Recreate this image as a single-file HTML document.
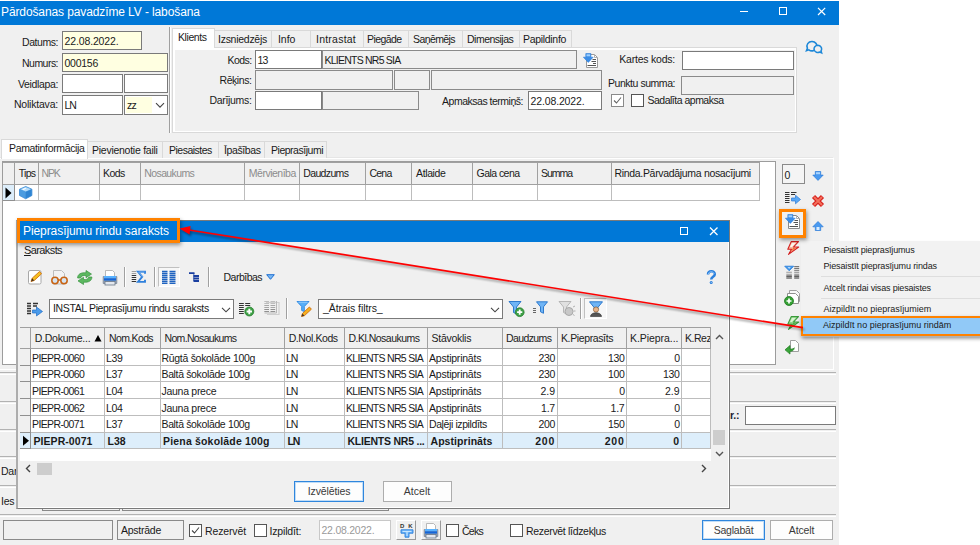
<!DOCTYPE html>
<html lang="lv"><head><meta charset="utf-8"><title>Pārdošanas pavadzīme LV - labošana</title>
<style>
*{box-sizing:border-box;margin:0;padding:0}
html,body{width:980px;height:545px;overflow:hidden;background:#fff}
body{position:relative;font-family:"Liberation Sans",sans-serif;font-size:10.5px;color:#1a1a1a;line-height:13px;letter-spacing:-0.25px}
.a{position:absolute}
span{white-space:nowrap}
.win{left:0;top:0;width:839px;height:545px;background:#f0f0f0;overflow:hidden}
.tb{left:0;top:0;width:839px;height:25px;background:#0078d7;color:#fff;border-top:1px solid #fff}
.tb .t{left:1px;top:3px;font-size:12px;line-height:16px;white-space:nowrap}
.in{position:absolute;background:#fff;border:1px solid #7a7a7a;height:19px;padding:2.5px 0 0 1.5px;white-space:nowrap;overflow:hidden}
.in.y{background:#ffffe1}
.in.d{background:#f0f0f0;border-color:#8a8a8a}
.lb{position:absolute;white-space:nowrap}
.r{text-align:right}
.tab{position:absolute;top:30px;height:17px;border:1px solid #d9d9d9;border-bottom:none;background:#f0f0f0;padding:1.5px 0 0 5px;white-space:nowrap}
.tab.on{top:28px;height:20px;background:#fff;padding-top:2px;z-index:2}
.cb{position:absolute;width:13px;height:13px;border:1px solid #555;background:#fff}
.hl{position:absolute;left:0;width:836px;height:2.5px;border-top:1.5px solid #b2b2b2;border-bottom:1px solid #fff}
.btn{position:absolute;height:21px;border:1px solid #adadad;background:#fdfdfd;text-align:center;padding-top:3px;color:#3a3a3a}
.btn.def{border:1px solid #2f86dd;box-shadow:inset 0 0 0 1px rgba(80,160,235,.35)}
.g{position:absolute;background:#fff}
.gh{position:absolute;top:0;height:22px;background:#f0f0f0;border-right:1px solid #a0a0a0;border-bottom:1px solid #a0a0a0;border-top:1px solid #a0a0a0;padding:4px 0 0 4px;white-space:nowrap;overflow:hidden}
.gc{position:absolute;border-right:1px solid #bdbdbd;border-bottom:1px solid #bdbdbd;white-space:nowrap;overflow:hidden;padding:2px 0 0 2px}
.gc.n{text-align:right;padding:2px 2px 0 0}
.gray{color:#8c8c8c}
.vsep{position:absolute;width:2px;border-left:1px solid #a0a0a0;border-right:1px solid #fff}
</style></head><body>
<div class="a win">
 <!-- title bar -->
 <div class="a tb"><div class="a t"><span style="letter-spacing:-0.11px">Pārdošanas pavadzīme LV - labošana</span></div>
  <svg class="a" style="left:730px;top:0" width="109" height="24" viewBox="0 0 109 24"><path d="M10 10.500h8" stroke="#fff" stroke-width="1" fill="none"/><rect x="49.500" y="6.500" width="7" height="7" stroke="#fff" fill="none"/><path d="M88 6.800l7.200 7.200M95.200 6.800l-7.200 7.200" stroke="#fff" stroke-width="1.200" fill="none"/></svg>
 </div>

 <!-- left header panel -->
 <div class="vsep" style="left:169px;top:27px;height:106px"></div>
 <div class="lb r" style="left:0;width:58px;top:35.5px"><span style="letter-spacing:-0.44px">Datums:</span></div>
 <div class="in y" style="left:62px;top:31px;width:80px"><span style="letter-spacing:-0.13px">22.08.2022.</span></div>
 <div class="lb r" style="left:0;width:58px;top:57px"><span style="letter-spacing:-0.53px">Numurs:</span></div>
 <div class="in y" style="left:62px;top:53px;width:106px"><span style="letter-spacing:-0.26px">000156</span></div>
 <div class="lb r" style="left:0;width:58px;top:77.5px"><span style="letter-spacing:-0.36px">Veidlapa:</span></div>
 <div class="in" style="left:62px;top:74px;width:61px"></div>
 <div class="in" style="left:124px;top:74px;width:44px"></div>
 <div class="lb r" style="left:0;width:58px;top:98px"><span style="letter-spacing:-0.21px">Noliktava:</span></div>
 <div class="in" style="left:62px;top:95px;width:61px;height:20px;padding-top:3px"><span style="letter-spacing:-1.20px">LN</span></div>
 <div class="in" style="left:124px;top:95px;width:44px;height:20px;padding:0"><div class="a" style="left:1px;top:1px;width:26px;height:16px;background:#ffffe1;padding:2px 0 0 1px"><span style="letter-spacing:-0.75px">zz</span></div>
  <svg class="a" style="left:30px;top:6px" width="10" height="7" viewBox="0 0 10 7"><path d="M1 1.200l4 4l4-4" stroke="#444" fill="none" stroke-width="1.100"/></svg></div>

 <!-- top tab control -->
 <div class="a" style="left:172px;top:47px;width:625px;height:86px;border:1px solid #d9d9d9;background:#f0f0f0"></div>
 <div class="a" style="left:173px;top:48px;width:623px;height:84px;border:1px solid #fff;border-top-width:2.5px;border-left-width:2px"></div>
 <div class="tab on" style="left:172px;width:43px;padding-left:5px"><span style="letter-spacing:-0.42px">Klients</span></div>
 <div class="tab" style="left:214px;width:58px;padding-left:3px"><span style="letter-spacing:-0.27px">Izsniedzējs</span></div>
 <div class="tab" style="left:271px;width:40px;padding-left:6px"><span style="letter-spacing:-0.05px">Info</span></div>
 <div class="tab" style="left:310px;width:54px;padding-left:5px"><span style="letter-spacing:0.23px">Intrastat</span></div>
 <div class="tab" style="left:363px;width:46px;padding-left:3px"><span style="letter-spacing:-0.56px">Piegāde</span></div>
 <div class="tab" style="left:408px;width:55px;padding-left:4px"><span style="letter-spacing:-0.59px">Saņēmējs</span></div>
 <div class="tab" style="left:462px;width:58px;padding-left:4px"><span style="letter-spacing:-0.51px">Dimensijas</span></div>
 <div class="tab" style="left:519px;width:53px;padding-left:3px"><span style="letter-spacing:-0.31px">Papildinfo</span></div>

 <div class="lb r" style="left:180px;width:71.500px;top:54px"><span style="letter-spacing:-0.57px">Kods:</span></div>
 <div class="in" style="left:255px;top:50px;width:67px"><span style="letter-spacing:-0.84px">13</span></div>
 <div class="in d" style="left:322px;top:50px;width:255px"><span style="letter-spacing:-0.77px">KLIENTS NR5 SIA</span></div>
 <div class="lb r" style="left:180px;width:71.500px;top:74px"><span style="letter-spacing:-0.43px">Rēķins:</span></div>
 <div class="in d" style="left:255px;top:70px;width:138px;height:20px"></div>
 <div class="in d" style="left:394px;top:70px;width:36px;height:20px"></div>
 <div class="in d" style="left:431px;top:70px;width:171px;height:20px"></div>
 <div class="lb r" style="left:180px;width:71.500px;top:94px"><span style="letter-spacing:-0.33px">Darījums:</span></div>
 <div class="in" style="left:255px;top:91px;width:67px"></div>
 <div class="in d" style="left:322px;top:91px;width:97px"></div>
 <div class="lb r" style="left:420px;width:103px;top:95px"><span style="letter-spacing:-0.49px">Apmaksas termiņš:</span></div>
 <div class="in" style="left:528px;top:91px;width:74px"><span style="letter-spacing:-0.13px">22.08.2022.</span></div>
 <div class="lb r" style="left:600px;width:75px;top:53px"><span style="letter-spacing:-0.22px">Kartes kods:</span></div>
 <div class="in" style="left:682px;top:51px;width:112px"></div>
 <div class="lb r" style="left:600px;width:75px;top:77px"><span style="letter-spacing:-0.46px">Punktu summa:</span></div>
 <div class="in d" style="left:681px;top:76px;width:113px"></div>
 <div class="cb" style="left:611px;top:94px;border-color:#8a8a8a"><svg width="11" height="11" viewBox="0 0 11 11" style="display:block"><path d="M2 5.500l2.500 2.500l4.500-5.500" stroke="#666" fill="none" stroke-width="1.100"/></svg></div>
 <div class="cb" style="left:631px;top:94px"></div>
 <div class="lb" style="left:647.500px;top:94px"><span style="letter-spacing:-0.50px">Sadalīta apmaksa</span></div>
 <!-- icons in header -->
 <svg class="a" style="left:582px;top:53px" width="17" height="16" viewBox="0 0 17 16"><path d="M4.500 1.500h8l3 3v10h-11z" fill="#fff" stroke="#9a9a9a"/><path d="M12.500 1.500v3h3" fill="none" stroke="#b0b0b0"/><path d="M10.500 6.500h3.500M9.500 8.500h4.500M11 10.500h3M5.500 12.500h8.500" stroke="#555"/><path d="M3.800 .6h5.100v3.600h2.300l-4.900 5.200l-4.900-5.200h2.400z" fill="#3b8de6" stroke="#2a7ad8" stroke-width=".6"/><path d="M4.500 1.300h3.700v2h-3.700z" fill="#9fd0ff"/></svg>
 <svg class="a" style="left:805px;top:40px" width="18" height="15" viewBox="0 0 18 15"><path d="M7 1.500a5 4.700 0 1 1 -3.200 8.300l-2.300 .9l.9-2.500a5 4.700 0 0 1 4.600-6.700z" fill="none" stroke="#1e88d8" stroke-width="1.600"/><path d="M12.800 5.300a3.800 3.600 0 1 0 2 6.700l1.800 .9l-.6-2.100a3.800 3.600 0 0 0 -3.200-5.500z" fill="#f0f0f0" stroke="#1e88d8" stroke-width="1.500"/></svg>
 <!-- lower tab control -->
 <div class="a" style="left:0;top:157px;width:834px;height:213px;border:1px solid #fff;border-left:none;border-top-color:#e6e6e6;background:#f0f0f0"></div>
 <div class="a" style="left:0;top:158px;width:833px;height:211px;border-top:1px solid #fff"></div>
 <div class="tab on" style="left:1px;top:139px;width:87px;height:20px;padding-left:7px"><span style="letter-spacing:-0.35px">Pamatinformācija</span></div>
 <div class="tab" style="left:87px;top:141px;height:17px;width:76px;padding-left:4px"><span style="letter-spacing:-0.26px">Pievienotie faili</span></div>
 <div class="tab" style="left:162px;top:141px;height:17px;width:57px;padding-left:6px"><span style="letter-spacing:-0.51px">Piesaistes</span></div>
 <div class="tab" style="left:218px;top:141px;height:17px;width:47px;padding-left:5px"><span style="letter-spacing:-0.40px">Īpašības</span></div>
 <div class="tab" style="left:264px;top:141px;height:17px;width:63px;padding-left:6px"><span style="letter-spacing:-0.48px">Pieprasījumi</span></div>

 <!-- main grid -->
 <div class="g" style="left:2px;top:161px;width:774px;height:204px;border:1px solid #9c9c9c">
  <div class="gh" style="height:22.5px;left:0px;width:12px;top:0;padding:0"></div>
  <div class="gh" style="height:22.5px;left:12px;width:24px;padding-left:3.8px"><span style="letter-spacing:-0.71px">Tips</span></div>
  <div class="gh gray" style="height:22.5px;left:36px;width:61px;padding-left:2.6px"><span style="letter-spacing:-1.20px">NPK</span></div>
  <div class="gh" style="height:22.5px;left:97px;width:41px;padding-left:3.1px"><span style="letter-spacing:-0.63px">Kods</span></div>
  <div class="gh gray" style="height:22.5px;left:138px;width:104px;padding-left:3.3px"><span style="letter-spacing:-0.61px">Nosaukums</span></div>
  <div class="gh gray" style="height:22.5px;left:242px;width:55px;padding-left:3.8px"><span style="letter-spacing:-0.50px">Mērvienība</span></div>
  <div class="gh" style="height:22.5px;left:297px;width:66px;padding-left:3.3px"><span style="letter-spacing:-0.65px">Daudzums</span></div>
  <div class="gh" style="height:22.5px;left:363px;width:46px;padding-left:3.5px"><span style="letter-spacing:-0.78px">Cena</span></div>
  <div class="gh" style="height:22.5px;left:409px;width:61px;padding-left:4px"><span style="letter-spacing:-0.37px">Atlaide</span></div>
  <div class="gh" style="height:22.5px;left:470px;width:65px;padding-left:3.5px"><span style="letter-spacing:-0.54px">Gala cena</span></div>
  <div class="gh" style="height:22.5px;left:535px;width:74px;padding-left:3px"><span style="letter-spacing:-1.04px">Summa</span></div>
  <div class="gh" style="height:22.5px;left:609px;width:148px;padding-left:2.5px"><span style="letter-spacing:-0.32px">Rinda.Pārvadājuma nosacījumi</span></div>
  <div class="gc" style="left:0px;top:22.5px;width:12px;height:16px;background:#ddeefb;border-color:#909090;padding:0"><svg width="10" height="15" viewBox="0 0 10 15" style="display:block"><path d="M2.500 2.500l6 5.500l-6 5.500z" fill="#000"/></svg></div>
  <div class="gc" style="left:12px;top:22.5px;width:24px;height:16px;padding:0"><svg width="23" height="15" viewBox="1 0 23 15" style="display:block"><path d="M5.500 4.200l6.200-2.700l6.200 2.700v6.300l-6.200 3.300l-6.200-3.300z" fill="#4a9be0" stroke="#3a8ad6" stroke-width=".8" stroke-linejoin="round"/><path d="M6.500 4.300l5.200-2.200l5.200 2.200l-5.200 2.300z" fill="#b4dcfa"/><path d="M8 4.200l3-1.300l1.500 .7l-3 1.500z" fill="#fff"/><path d="M11.700 7v6.500l5.800-3.100v-5.800z" fill="#2f84d2"/></svg></div>
  <div class="gc" style="left:36px;top:22.5px;width:61px;height:16px"></div>
  <div class="gc" style="left:97px;top:22.5px;width:41px;height:16px"></div>
  <div class="gc" style="left:138px;top:22.5px;width:104px;height:16px"></div>
  <div class="gc" style="left:242px;top:22.5px;width:55px;height:16px"></div>
  <div class="gc" style="left:297px;top:22.5px;width:66px;height:16px"></div>
  <div class="gc" style="left:363px;top:22.5px;width:46px;height:16px"></div>
  <div class="gc" style="left:409px;top:22.5px;width:61px;height:16px"></div>
  <div class="gc" style="left:470px;top:22.5px;width:65px;height:16px"></div>
  <div class="gc" style="left:535px;top:22.5px;width:74px;height:16px"></div>
  <div class="gc" style="left:609px;top:22.5px;width:148px;height:16px"></div>
 </div>

 <!-- right icon strip -->
 <div class="in" style="left:782px;top:164px;width:23px;height:20px;padding-top:3.5px;border-color:#8a8a8a;background:#f4f4f4"><span style="letter-spacing:-0.84px">0</span></div>
 <svg class="a" style="left:812px;top:171px" width="12" height="10" viewBox="0 0 12 10"><path d="M3.300 .5h5.400v3.600h2.500l-5.200 5.300l-5.200-5.300h2.500z" fill="#4a9af0" stroke="#2a7ad8" stroke-width=".7"/><path d="M4 1.200h4v2h-4z" fill="#a8d4ff"/></svg>
 <svg class="a" style="left:784px;top:191px" width="17" height="14" viewBox="0 0 17 14"><path d="M1 1.500h4.500M1 3.500h4.500M1 5.500h4.500M1 7.500h4.500M1 9.500h4.500M1 11.500h4.500M7 1.500h5.500M7 3.500h4" stroke="#333" stroke-width="1.100"/><path d="M7.500 7h4v-2.800l5 4.300l-5 4.300v-2.800h-4z" fill="#5aa8f5" stroke="#2a7ad8" stroke-width=".7"/></svg>
 <svg class="a" style="left:811px;top:194px" width="14" height="14" viewBox="0 0 14 14"><path d="M2.500 2.500l9 9M11.500 2.500l-9 9" stroke="#d8201c" stroke-width="4.400"/><path d="M3 3l8 8M11 3l-8 8" stroke="#f2705c" stroke-width="2"/></svg>
 <svg class="a" style="left:784px;top:214px" width="17" height="16" viewBox="0 0 17 16"><path d="M4.500 1.500h8l3 3v10h-11z" fill="#fff" stroke="#8a8a8a"/><path d="M12.500 1.500v3h3" fill="none" stroke="#b0b0b0"/><path d="M10.500 6.500h3.500M9.500 8.500h4.500M11 10.500h3M5.500 12.500h8.500" stroke="#555"/><path d="M3.800 .6h5.100v3.600h2.300l-4.900 5.200l-4.900-5.200h2.400z" fill="#3b8de6" stroke="#2a7ad8" stroke-width=".6"/><path d="M4.500 1.300h3.700v2h-3.700z" fill="#9fd0ff"/></svg>
 <svg class="a" style="left:812px;top:221px" width="12" height="10" viewBox="0 0 12 10"><path d="M6 .5l5.200 5.300h-2.500v3.700h-5.400v-3.700h-2.500z" fill="#4a9af0" stroke="#2a7ad8" stroke-width=".7"/><path d="M4.500 6h3v3h-3z" fill="#d8ecff"/></svg>
 <svg class="a" style="left:787px;top:241px" width="13" height="14" viewBox="0 0 13 14"><path d="M4.200 .6h7.300l-5 5.400h5.200l-10.200 7.400l3-5.200h-3.700z" fill="#f6b8a0" stroke="#d42020" stroke-width="1.100" stroke-linejoin="round"/><path d="M5 1.700h4l-4 4.300h-2z" fill="#fff4ec"/><path d="M6 7l3-.3l-5 3.800z" fill="#f07030"/></svg>
 <svg class="a" style="left:784px;top:265px" width="16" height="14" viewBox="0 0 16 14"><path d="M.7 1.200h9l-4.500 4.600z" fill="#3f95e8" stroke="#2a7fdc" stroke-width=".8" stroke-linejoin="round"/><path d="M3.500 2.200h3.400l-1.700 1.600z" fill="#d8ecff"/><path d="M2.300 7.300h5.600M2.300 9.200h5.600" stroke="#9a9a9a" stroke-width="1.100"/><path d="M2.300 11.100h5.600M2.300 13h5.600" stroke="#333" stroke-width="1.100"/><path d="M10.200 1.600h5M10.200 3.500h5" stroke="#777" stroke-width="1.100"/><path d="M10.200 5.400h5M10.200 7.300h5M10.200 9.200h5" stroke="#8a8a8a" stroke-width="1.100"/><path d="M10.200 11.100h5M10.200 13h5" stroke="#333" stroke-width="1.100"/></svg>
 <svg class="a" style="left:783px;top:289px" width="18" height="17" viewBox="0 0 18 17"><path d="M6.500 1.500h7l3 3v8h-10z" fill="#f8f8f8" stroke="#a0a0a0"/><path d="M4.500 4.500h8l3 3v7h-11z" fill="#fff" stroke="#909090"/><circle cx="6" cy="12" r="4.500" fill="#35a035" stroke="#1f7a1f" stroke-width=".8"/><path d="M6 9.500v5M3.500 12h5" stroke="#fff" stroke-width="1.700"/></svg>
 <svg class="a" style="left:787px;top:316px" width="13" height="14" viewBox="0 0 13 14"><path d="M4.200 .6h7.300l-5 5.400h5.200l-10.200 7.400l3-5.200h-3.700z" fill="#8fd48a" stroke="#3a9a3a" stroke-width="1.100" stroke-linejoin="round"/><path d="M5 1.700h4l-4 4.300h-2z" fill="#d8f4d0"/><path d="M6 7l3-.3l-5 3.800z" fill="#4aa844"/></svg>
 <svg class="a" style="left:784px;top:339px" width="16" height="16" viewBox="0 0 16 16"><path d="M6.500 1.500h5l3 3v8h-8z" fill="#fff" stroke="#a0a0a0"/><path d="M6 6.500l-5 4.300l5 4.300v-2.800c2.500 0 3.800-.8 4.300-3.500c-1 1.200-2.300 1.300-4.300 1.300z" fill="#3aa63a" stroke="#1f7a1f" stroke-width=".7"/></svg>

 <!-- lower panels -->
 <div class="hl" style="top:372px"></div>
 <div class="hl" style="top:401px"></div>
 <div class="hl" style="top:429px"></div>
 <div class="hl" style="top:456px"></div>
 <div class="hl" style="top:485px"></div>
 <div class="hl" style="top:514px"></div>
 <div class="lb" style="left:730px;top:409px;font-weight:bold;color:#223">r.:</div>
 <div class="in" style="left:745px;top:406px;width:91px"></div>
 <div class="lb" style="left:1px;top:465px">Dar</div>
 <div class="lb" style="left:1px;top:495px">Ies</div>
 <div class="in d" style="left:42px;top:489px;width:78px;height:22px"></div>
 <div class="in d" style="left:122px;top:489px;width:267px;height:22px"></div>

 <!-- bottom bar -->
 <div class="in d" style="left:3px;top:520px;width:110px;height:20px"></div>
 <div class="in d" style="left:117px;top:520px;width:67px;height:20px;padding-top:3px;padding-left:3px"><span style="letter-spacing:-0.25px">Apstrāde</span></div>
 <div class="cb" style="left:189px;top:524px"><svg width="11" height="11" viewBox="0 0 11 11" style="display:block"><path d="M2 5.500l2.500 2.500l4.500-5.500" stroke="#444" fill="none" stroke-width="1.100"/></svg></div>
 <div class="lb" style="left:205px;top:524.5px"><span style="letter-spacing:-0.13px">Rezervēt</span></div>
 <div class="cb" style="left:254px;top:524px"></div>
 <div class="lb" style="left:269.500px;top:524.5px"><span style="letter-spacing:-0.17px">Izpildīt:</span></div>
 <div class="in" style="left:319px;top:520px;width:72px;height:20px;padding-top:3px;border-color:#c8c8c8;color:#9a9a9a"><span style="letter-spacing:-0.24px">22.08.2022.</span></div>
 <div class="a" style="left:396px;top:520px;width:20px;height:20px;border:1px solid #fff;border-right-color:#9a9a9a;border-bottom-color:#9a9a9a;background:#f0f0f0"><div class="a" style="left:3px;top:2px;font-size:6px;line-height:6px;font-weight:bold;color:#333;letter-spacing:4px">DK</div><svg class="a" style="left:2.500px;top:8px" width="14" height="9" viewBox="0 0 14 9"><path d="M1 .8h12v3.400h-4v4h-4v-4h-4z" fill="#6db4f8" stroke="#2a7fdc" stroke-width=".9"/><path d="M2.500 2.400h9M7 3v4" stroke="#d4ecff" stroke-width="1"/></svg></div>
 <div class="a" style="left:421px;top:520px;width:20px;height:20px;border:1px solid #fff;border-right-color:#9a9a9a;border-bottom-color:#9a9a9a;background:#f0f0f0"><svg class="a" style="left:1px;top:2px" width="16" height="16" viewBox="0 0 16 16"><path d="M1.200 6.500h13.600v7h-13.600z" fill="#9aa6b4" stroke="#7c8898" stroke-width=".8"/><path d="M3.500 .5h7l2 2v4.500h-9z" fill="#fff" stroke="#a8a8a8" stroke-width=".8"/><rect x="2" y="6" width="12" height="2.300" fill="#59b2ff"/><rect x="2" y="8.300" width="12" height="2.300" fill="#1565d8"/><rect x="3" y="11.500" width="10" height="3.500" fill="#e4e8ee" stroke="#6a7888" stroke-width=".8"/></svg></div>
 <div class="cb" style="left:446px;top:524px"></div>
 <div class="lb" style="left:462px;top:524.5px"><span style="letter-spacing:-0.73px">Čeks</span></div>
 <div class="cb" style="left:510px;top:524px"></div>
 <div class="lb" style="left:526px;top:524.5px"><span style="letter-spacing:-0.32px">Rezervēt līdzekļus</span></div>
 <div class="btn def" style="left:702px;top:520px;width:63px;height:20px"><span style="letter-spacing:-0.22px">Saglabāt</span></div>
 <div class="btn" style="left:770px;top:520px;width:63px;height:20px"><span style="letter-spacing:-0.14px">Atcelt</span></div>
</div>
<!-- dialog -->
<div class="a" style="left:16px;top:220px;width:714px;height:289px;background:#f0f0f0;border:1px solid #7a7a7a;border-left:2px solid #adadad;overflow:hidden"><div class="a" style="left:0;top:0;width:711px;height:287px;border-right:1px solid #fff;border-bottom:1px solid #fff"></div><div class="a" style="left:1px;top:-1px;width:709px;height:289px">
 <div class="a" style="left:-1px;top:1px;width:712px;height:21px;background:#0078d7;color:#fff"><div class="a" style="left:5px;top:2px;font-size:12px;line-height:16px"><span style="letter-spacing:-0.08px">Pieprasījumu rindu saraksts</span></div>
  <svg class="a" style="left:655px;top:-1px" width="54" height="23" viewBox="0 0 54 23"><rect x="7.500" y="7.500" width="7" height="7" stroke="#fff" fill="none"/><path d="M37 7.500l7.500 7.500M44.500 7.500l-7.500 7.500" stroke="#fff" stroke-width="1.300" fill="none"/></svg></div>
 <div class="lb" style="left:5px;top:23px;font-size:11px;line-height:14px;letter-spacing:0"><span style="letter-spacing:-0.60px"><u>S</u>araksts</span></div>
 <!-- toolbar 1 -->
 <svg class="a" style="left:9px;top:50px" width="15" height="15" viewBox="0 0 15 15"><rect x=".5" y=".5" width="12.500" height="13.500" rx="1.500" fill="#fff" stroke="#a8a8a8"/><path d="M3 11.500l1.200-3.300l7.300-6.700l2 2.300l-7.300 6.700z" fill="#f5c020" stroke="#d07010" stroke-width=".9"/><path d="M3 11.500l1.200-3.300l2 2.300z" fill="#4a3520"/></svg>
 <svg class="a" style="left:31px;top:50px" width="19" height="15" viewBox="0 0 19 15"><path d="M3.500 .5h8l3 3v10.500h-11z" fill="#f2f2f2" stroke="#bcbcbc"/><circle cx="5" cy="10.500" r="3.200" fill="#d4e4f2" stroke="#c86414" stroke-width="1.500"/><circle cx="14" cy="10.500" r="3.200" fill="#d4e4f2" stroke="#c86414" stroke-width="1.500"/><path d="M8 10h3" stroke="#c86414" stroke-width="1.500"/></svg>
 <svg class="a" style="left:58px;top:50px" width="16" height="15" viewBox="0 0 16 15"><g fill="#5cb860" stroke="#3a9440" stroke-width=".7"><path d="M.6 8c0-4 3.500-5.600 8.400-5.200v-2.300l5.500 3.600l-5.500 3.600v-2.200c-2.800-.4-4.800 .5-5.400 2.500z"/><path d="M.6 8c0-4 3.500-5.600 8.400-5.200v-2.300l5.500 3.600l-5.500 3.600v-2.200c-2.800-.4-4.800 .5-5.400 2.500z" transform="rotate(180 7.750 7.500)"/></g></svg>
 <svg class="a" style="left:83px;top:50px" width="16" height="16" viewBox="0 0 16 16"><path d="M1.200 6.500h13.600v7h-13.600z" fill="#9aa6b4" stroke="#7c8898" stroke-width=".8"/><path d="M3.500 .5h7l2 2v4.500h-9z" fill="#fff" stroke="#a8a8a8" stroke-width=".8"/><rect x="2" y="6" width="12" height="2.300" fill="#59b2ff"/><rect x="2" y="8.300" width="12" height="2.300" fill="#1565d8"/><rect x="3" y="11.500" width="10" height="3.500" fill="#e4e8ee" stroke="#6a7888" stroke-width=".8"/></svg>
 <div class="vsep" style="left:105px;top:47px;height:20px"></div>
 <svg class="a" style="left:112px;top:50px" width="16" height="14" viewBox="0 0 16 14"><path d="M.7 1.500h4.500M.7 3.500h4.500" stroke="#a0a0a0" stroke-width="1.200"/><path d="M.7 5.500h4.500M.7 7.500h4.500M.7 9.500h4.500M.7 11.500h4.500" stroke="#333" stroke-width="1.200"/><path d="M14 3.800v-2.100h-7l4.200 5.100l-4.200 5.100h7v-2.100" fill="none" stroke="#2f80dc" stroke-width="1.900"/><path d="M13.600 2h-6l4 4.800" fill="none" stroke="#a8d0ff" stroke-width=".5"/></svg>
 <div class="vsep" style="left:135px;top:47px;height:20px"></div>
 <div class="a" style="left:139px;top:47px;width:22px;height:20px;background:#f7f7f7;border:1px solid #c0c0c0;border-right-color:#fff;border-bottom-color:#fff"></div>
 <svg class="a" style="left:143px;top:50px" width="14" height="14" viewBox="0 0 14 14"><path d="M0 1.500h5.500M0 3.500h5.500M0 5.500h5.500M0 7.500h5.500M0 9.500h5.500M0 11.500h5.500M0 13.500h5.500M7.500 1.500h6M7.500 3.500h6M7.500 5.500h6M7.500 7.500h6M7.500 9.500h6M7.500 11.500h6M7.500 13.500h6" stroke="#1f63c0" stroke-width="1.300"/></svg>
 <svg class="a" style="left:170px;top:52px" width="11" height="11" viewBox="0 0 11 11"><path d="M0 1.200h5.500M4.500 4h5.500M4.500 6.500h5.500M4.500 9h5.500" stroke="#1a3fa0" stroke-width="1.800" fill="none"/><path d="M4.800 1v8" stroke="#1a3fa0" stroke-width=".8"/></svg>
 <div class="vsep" style="left:189px;top:47px;height:20px"></div>
 <div class="lb" style="left:204.500px;top:51px"><span style="letter-spacing:-0.51px">Darbības</span></div>
 <svg class="a" style="left:247px;top:54px" width="9" height="6" viewBox="0 0 9 6"><path d="M.7 .7h7.600l-3.800 4.600z" fill="#7ab8f5" stroke="#1f6fd0" stroke-width="1"/></svg>
 <svg class="a" style="left:687px;top:50px" width="11" height="15" viewBox="0 0 11 15"><path d="M2 4.500c0-4.200 6.800-4.200 6.800-.3c0 2.700-3.600 2.500-3.600 5.300" fill="none" stroke="#2a7fdc" stroke-width="2.500"/><path d="M2.300 4c.3-3 5.600-3 5.800 0" fill="none" stroke="#9fd0ff" stroke-width=".8"/><circle cx="5.200" cy="12.600" r="1.500" fill="#2a7fdc"/><circle cx="5.200" cy="12.600" r=".5" fill="#cfe8ff"/></svg>

 <!-- toolbar 2 -->
 <svg class="a" style="left:8px;top:82px" width="16" height="15" viewBox="0 0 16 15"><path d="M0 1.500h4M0 4h4M0 6.500h4M0 9h4M0 11.500h4M6 1.500h5M6 4h4" stroke="#333" stroke-width="1.300"/><path d="M5.500 8h4v-3l6 4.500l-6 4.500v-3h-4z" fill="#4b9bea" stroke="#1f6fc8" stroke-width=".7"/></svg>
 <div class="in" style="left:30px;top:79px;width:185px;height:20px;padding:2px 0 0 3px"><span style="letter-spacing:-0.36px">INSTAL Pieprasījumu rindu saraksts</span><svg class="a" style="left:171px;top:7px" width="10" height="6" viewBox="0 0 10 6"><path d="M1 .8l4 4l4-4" stroke="#444" fill="none" stroke-width="1.100"/></svg></div>
 <svg class="a" style="left:220px;top:82px" width="16" height="16" viewBox="0 0 16 16"><path d="M0 1.500h4.800M0 3.500h4.800M0 5.500h4.800M0 7.500h4.800M0 9.500h4.800M0 11.500h4.800M6.200 1.500h5M6.200 3.500h5" stroke="#333" stroke-width="1.100"/><circle cx="10.300" cy="9.500" r="4.500" fill="#3ea046" stroke="#2a8030" stroke-width=".8"/><path d="M10.300 6.800v5.400M7.600 9.500h5.400" stroke="#fff" stroke-width="1.900"/></svg>
 <svg class="a" style="left:245px;top:80px" width="16" height="16" viewBox="0 0 16 16"><path d="M2 2.500h13v12h-12" fill="none" stroke="#cfcfcf" stroke-width="1.200"/><path d="M.3 1.500h4.700M.3 3.500h4.700M6.500 1.500h4.700M6.500 3.500h4.700" stroke="#bdbdbd" stroke-width="1.100"/><path d="M.3 5.500h4.700M.3 7.500h4.700M6.500 5.500h4.700M6.500 7.500h4.700" stroke="#a6a6a6" stroke-width="1.100"/><path d="M.3 9.500h4.700M.3 11.500h4.700M6.500 9.500h4.700M6.500 11.500h4.700" stroke="#909090" stroke-width="1.100"/><path d="M12.500 1v12h-12" fill="none" stroke="#b8b8b8" stroke-width="1"/></svg>
 <div class="vsep" style="left:267px;top:78px;height:21px"></div>
 <svg class="a" style="left:277px;top:80px" width="18" height="18" viewBox="0 0 18 18"><path d="M1 1.500h12l-4.700 5v5l-2.600-1v-4z" fill="#56aef8" stroke="#2a86e0" stroke-width=".9"/><path d="M2.500 2.200h9" stroke="#a8d8ff" stroke-width=".8"/><path d="M5.500 16.500l.9-3l7-6.500l2 2.200l-7 6.500z" fill="#f5b020" stroke="#d07010" stroke-width=".9"/><path d="M5.500 16.500l.9-3l2 2.200z" fill="#4a3520"/></svg>
 <div class="in" style="left:299px;top:79px;width:185px;height:20px;padding:2px 0 0 4px"><span style="letter-spacing:-0.07px">_Ātrais filtrs_</span><svg class="a" style="left:171px;top:7px" width="10" height="6" viewBox="0 0 10 6"><path d="M1 .8l4 4l4-4" stroke="#444" fill="none" stroke-width="1.100"/></svg></div>
 <svg class="a" style="left:489px;top:80px" width="19" height="18" viewBox="0 0 19 18"><path d="M1 1.500h12l-4.500 5.500v7l-3-1.500v-5.500z" fill="#6fb4f5" stroke="#1f6fc8" stroke-width=".9"/><circle cx="11.700" cy="12.200" r="4.400" fill="#3ea046" stroke="#2a8030" stroke-width=".8"/><path d="M11.700 9.600v5.200M9.100 12.200h5.200" stroke="#fff" stroke-width="1.800"/></svg>
 <svg class="a" style="left:514px;top:81px" width="16" height="15" viewBox="0 0 16 15"><path d="M3.500 .8h11l-4 5v6.500l-3-1.500v-5z" fill="#6fb4f5" stroke="#1f6fc8" stroke-width=".9"/><path d="M0 7.500h3M0 9.500h3M0 11.500h3" stroke="#666" stroke-width="1.100"/></svg>
 <svg class="a" style="left:539px;top:80px" width="18" height="17" viewBox="0 0 18 17"><path d="M1 1.500h12l-4.500 5.500v7l-3-1.500v-5.500z" fill="#e0e0e0" stroke="#b0b0b0" stroke-width=".9"/><circle cx="11" cy="11.500" r="4" fill="#c8c8c8" stroke="#a8a8a8"/><path d="M15 7l2-1M15.500 11h2M15 14.500l1.500 1" stroke="#b0b0b0"/></svg>
 <div class="vsep" style="left:561px;top:78px;height:21px"></div>
 <div class="a" style="left:565px;top:78px;width:23px;height:21px;background:#f7f7f7;border:1px solid #c0c0c0;border-right-color:#fff;border-bottom-color:#fff"></div>
 <svg class="a" style="left:570px;top:81px" width="14" height="16" viewBox="0 0 14 16"><path d="M.5 .8h13l-4.500 5.500v2h-4v-2z" fill="#6fb4f5" stroke="#1f6fc8" stroke-width=".9"/><circle cx="7" cy="8.500" r="2.600" fill="#e8b48a" stroke="#8a5a30" stroke-width=".7"/><path d="M1.500 15.500c0-5 11-5 11 0z" fill="#555" stroke="#333" stroke-width=".6"/></svg>
 <!-- dialog grid -->
 <div class="g" style="left:1px;top:107px;width:708px;height:134px;background:#fff;overflow:hidden">
  <div class="gh" style="left:0;width:11px;padding:0"></div>
  <div class="gh" style="left:11px;width:74px;padding-left:3.8px;color:#222"><span style="letter-spacing:-0.26px">D.Dokume...</span><svg class="a" style="left:63px;top:7px" width="8" height="7" viewBox="0 0 8 7"><path d="M4 0l3.500 6.500h-7z" fill="#000"/></svg></div>
  <div class="gh" style="left:85px;width:55.5px;padding-left:4px;color:#222"><span style="letter-spacing:-0.63px">Nom.Kods</span></div>
  <div class="gh" style="left:140.5px;width:124.5px;padding-left:4px;color:#222"><span style="letter-spacing:-0.66px">Nom.Nosaukums</span></div>
  <div class="gh" style="left:265px;width:60px;padding-left:3.7px;color:#222"><span style="letter-spacing:-0.41px">D.Nol.Kods</span></div>
  <div class="gh" style="left:325px;width:83px;padding-left:3.5px;color:#222"><span style="letter-spacing:-0.51px">D.Kl.Nosaukums</span></div>
  <div class="gh" style="left:408px;width:74.5px;padding-left:3.5px;color:#222"><span style="letter-spacing:-0.26px">Stāvoklis</span></div>
  <div class="gh" style="left:482.5px;width:55px;padding-left:3.5px;color:#222"><span style="letter-spacing:-0.61px">Daudzums</span></div>
  <div class="gh" style="left:537.5px;width:69.5px;padding-left:3.5px;color:#222"><span style="letter-spacing:-0.38px">K.Pieprasīts</span></div>
  <div class="gh" style="left:607px;width:55px;padding-left:3px;color:#222"><span style="letter-spacing:-0.06px">K.Piepra...</span></div>
  <div class="gh" style="left:662px;width:29px;padding-left:3px;color:#222"><span style="letter-spacing:-0.47px">K.Rezervēts</span></div>
  <div class="gc" style="left:0;top:22.00px;width:11px;height:16.72px;background:#f0f0f0;border-color:#909090;padding:0"></div>
  <div class="gc" style="left:11px;top:22.00px;width:74px;height:16.72px;padding-left:1px;padding-top:2.6px;"><span style="letter-spacing:-0.61px">PIEPR-0060</span></div>
  <div class="gc" style="left:85px;top:22.00px;width:55.5px;height:16.72px;padding-left:1px;padding-top:2.6px;"><span style="letter-spacing:-0.34px">L39</span></div>
  <div class="gc" style="left:140.5px;top:22.00px;width:124.5px;height:16.72px;padding-left:1px;padding-top:2.6px;"><span style="letter-spacing:-0.30px">Rūgtā šokolāde 100g</span></div>
  <div class="gc" style="left:265px;top:22.00px;width:60px;height:16.72px;padding-left:1px;padding-top:2.6px;"><span style="letter-spacing:-1.20px">LN</span></div>
  <div class="gc" style="left:325px;top:22.00px;width:83px;height:16.72px;padding-left:1px;padding-top:2.6px;"><span style="letter-spacing:-0.70px">KLIENTS NR5 SIA</span></div>
  <div class="gc" style="left:408px;top:22.00px;width:74.5px;height:16.72px;padding-left:1px;padding-top:2.6px;"><span style="letter-spacing:-0.22px">Apstiprināts</span></div>
  <div class="gc n" style="left:482.5px;top:22.00px;width:55px;height:16.72px;padding-right:1.5px;padding-left:1px;padding-top:2.6px;"><span style="letter-spacing:-0.34px">230</span></div>
  <div class="gc n" style="left:537.5px;top:22.00px;width:69.5px;height:16.72px;padding-right:1.5px;padding-left:1px;padding-top:2.6px;"><span style="letter-spacing:-0.34px">130</span></div>
  <div class="gc n" style="left:607px;top:22.00px;width:55px;height:16.72px;padding-right:1.5px;padding-left:1px;padding-top:2.6px;"><span style="letter-spacing:-0.64px">0</span></div>
  <div class="gc" style="left:662px;top:22.00px;width:29px;height:16.72px;padding-left:1px;padding-top:2.6px;"></div>
  <div class="gc" style="left:0;top:38.72px;width:11px;height:16.72px;background:#f0f0f0;border-color:#909090;padding:0"></div>
  <div class="gc" style="left:11px;top:38.72px;width:74px;height:16.72px;padding-left:1px;padding-top:2.6px;"><span style="letter-spacing:-0.61px">PIEPR-0060</span></div>
  <div class="gc" style="left:85px;top:38.72px;width:55.5px;height:16.72px;padding-left:1px;padding-top:2.6px;"><span style="letter-spacing:-0.34px">L37</span></div>
  <div class="gc" style="left:140.5px;top:38.72px;width:124.5px;height:16.72px;padding-left:1px;padding-top:2.6px;"><span style="letter-spacing:-0.36px">Baltā šokolāde 100g</span></div>
  <div class="gc" style="left:265px;top:38.72px;width:60px;height:16.72px;padding-left:1px;padding-top:2.6px;"><span style="letter-spacing:-1.20px">LN</span></div>
  <div class="gc" style="left:325px;top:38.72px;width:83px;height:16.72px;padding-left:1px;padding-top:2.6px;"><span style="letter-spacing:-0.70px">KLIENTS NR5 SIA</span></div>
  <div class="gc" style="left:408px;top:38.72px;width:74.5px;height:16.72px;padding-left:1px;padding-top:2.6px;"><span style="letter-spacing:-0.22px">Apstiprināts</span></div>
  <div class="gc n" style="left:482.5px;top:38.72px;width:55px;height:16.72px;padding-right:1.5px;padding-left:1px;padding-top:2.6px;"><span style="letter-spacing:-0.34px">230</span></div>
  <div class="gc n" style="left:537.5px;top:38.72px;width:69.5px;height:16.72px;padding-right:1.5px;padding-left:1px;padding-top:2.6px;"><span style="letter-spacing:-0.34px">100</span></div>
  <div class="gc n" style="left:607px;top:38.72px;width:55px;height:16.72px;padding-right:1.5px;padding-left:1px;padding-top:2.6px;"><span style="letter-spacing:-0.34px">130</span></div>
  <div class="gc" style="left:662px;top:38.72px;width:29px;height:16.72px;padding-left:1px;padding-top:2.6px;"></div>
  <div class="gc" style="left:0;top:55.44px;width:11px;height:16.72px;background:#f0f0f0;border-color:#909090;padding:0"></div>
  <div class="gc" style="left:11px;top:55.44px;width:74px;height:16.72px;padding-left:1px;padding-top:2.6px;"><span style="letter-spacing:-0.61px">PIEPR-0061</span></div>
  <div class="gc" style="left:85px;top:55.44px;width:55.5px;height:16.72px;padding-left:1px;padding-top:2.6px;"><span style="letter-spacing:-0.34px">L04</span></div>
  <div class="gc" style="left:140.5px;top:55.44px;width:124.5px;height:16.72px;padding-left:1px;padding-top:2.6px;"><span style="letter-spacing:-0.28px">Jauna prece</span></div>
  <div class="gc" style="left:265px;top:55.44px;width:60px;height:16.72px;padding-left:1px;padding-top:2.6px;"><span style="letter-spacing:-1.20px">LN</span></div>
  <div class="gc" style="left:325px;top:55.44px;width:83px;height:16.72px;padding-left:1px;padding-top:2.6px;"><span style="letter-spacing:-0.70px">KLIENTS NR5 SIA</span></div>
  <div class="gc" style="left:408px;top:55.44px;width:74.5px;height:16.72px;padding-left:1px;padding-top:2.6px;"><span style="letter-spacing:-0.22px">Apstiprināts</span></div>
  <div class="gc n" style="left:482.5px;top:55.44px;width:55px;height:16.72px;padding-right:1.5px;padding-left:1px;padding-top:2.6px;"><span style="letter-spacing:-0.04px">2.9</span></div>
  <div class="gc n" style="left:537.5px;top:55.44px;width:69.5px;height:16.72px;padding-right:1.5px;padding-left:1px;padding-top:2.6px;"><span style="letter-spacing:-0.64px">0</span></div>
  <div class="gc n" style="left:607px;top:55.44px;width:55px;height:16.72px;padding-right:1.5px;padding-left:1px;padding-top:2.6px;"><span style="letter-spacing:-0.04px">2.9</span></div>
  <div class="gc" style="left:662px;top:55.44px;width:29px;height:16.72px;padding-left:1px;padding-top:2.6px;"></div>
  <div class="gc" style="left:0;top:72.16px;width:11px;height:16.72px;background:#f0f0f0;border-color:#909090;padding:0"></div>
  <div class="gc" style="left:11px;top:72.16px;width:74px;height:16.72px;padding-left:1px;padding-top:2.6px;"><span style="letter-spacing:-0.61px">PIEPR-0062</span></div>
  <div class="gc" style="left:85px;top:72.16px;width:55.5px;height:16.72px;padding-left:1px;padding-top:2.6px;"><span style="letter-spacing:-0.34px">L04</span></div>
  <div class="gc" style="left:140.5px;top:72.16px;width:124.5px;height:16.72px;padding-left:1px;padding-top:2.6px;"><span style="letter-spacing:-0.28px">Jauna prece</span></div>
  <div class="gc" style="left:265px;top:72.16px;width:60px;height:16.72px;padding-left:1px;padding-top:2.6px;"><span style="letter-spacing:-1.20px">LN</span></div>
  <div class="gc" style="left:325px;top:72.16px;width:83px;height:16.72px;padding-left:1px;padding-top:2.6px;"><span style="letter-spacing:-0.70px">KLIENTS NR5 SIA</span></div>
  <div class="gc" style="left:408px;top:72.16px;width:74.5px;height:16.72px;padding-left:1px;padding-top:2.6px;"><span style="letter-spacing:-0.22px">Apstiprināts</span></div>
  <div class="gc n" style="left:482.5px;top:72.16px;width:55px;height:16.72px;padding-right:1.5px;padding-left:1px;padding-top:2.6px;"><span style="letter-spacing:-0.20px">1.7</span></div>
  <div class="gc n" style="left:537.5px;top:72.16px;width:69.5px;height:16.72px;padding-right:1.5px;padding-left:1px;padding-top:2.6px;"><span style="letter-spacing:-0.20px">1.7</span></div>
  <div class="gc n" style="left:607px;top:72.16px;width:55px;height:16.72px;padding-right:1.5px;padding-left:1px;padding-top:2.6px;"><span style="letter-spacing:-0.64px">0</span></div>
  <div class="gc" style="left:662px;top:72.16px;width:29px;height:16.72px;padding-left:1px;padding-top:2.6px;"></div>
  <div class="gc" style="left:0;top:88.88px;width:11px;height:16.72px;background:#f0f0f0;border-color:#909090;padding:0"></div>
  <div class="gc" style="left:11px;top:88.88px;width:74px;height:16.72px;padding-left:1px;padding-top:2.6px;"><span style="letter-spacing:-0.61px">PIEPR-0071</span></div>
  <div class="gc" style="left:85px;top:88.88px;width:55.5px;height:16.72px;padding-left:1px;padding-top:2.6px;"><span style="letter-spacing:-0.34px">L37</span></div>
  <div class="gc" style="left:140.5px;top:88.88px;width:124.5px;height:16.72px;padding-left:1px;padding-top:2.6px;"><span style="letter-spacing:-0.36px">Baltā šokolāde 100g</span></div>
  <div class="gc" style="left:265px;top:88.88px;width:60px;height:16.72px;padding-left:1px;padding-top:2.6px;"><span style="letter-spacing:-1.20px">LN</span></div>
  <div class="gc" style="left:325px;top:88.88px;width:83px;height:16.72px;padding-left:1px;padding-top:2.6px;"><span style="letter-spacing:-0.70px">KLIENTS NR5 SIA</span></div>
  <div class="gc" style="left:408px;top:88.88px;width:74.5px;height:16.72px;padding-left:1px;padding-top:2.6px;"><span style="letter-spacing:-0.40px">Daļēji izpildīts</span></div>
  <div class="gc n" style="left:482.5px;top:88.88px;width:55px;height:16.72px;padding-right:1.5px;padding-left:1px;padding-top:2.6px;"><span style="letter-spacing:-0.34px">200</span></div>
  <div class="gc n" style="left:537.5px;top:88.88px;width:69.5px;height:16.72px;padding-right:1.5px;padding-left:1px;padding-top:2.6px;"><span style="letter-spacing:-0.34px">150</span></div>
  <div class="gc n" style="left:607px;top:88.88px;width:55px;height:16.72px;padding-right:1.5px;padding-left:1px;padding-top:2.6px;"><span style="letter-spacing:-0.64px">0</span></div>
  <div class="gc" style="left:662px;top:88.88px;width:29px;height:16.72px;padding-left:1px;padding-top:2.6px;"></div>
  <div class="gc" style="left:0;top:105.60px;width:11px;height:16.72px;background:#ddeefb;border-color:#909090;padding:0"><svg width="10" height="15" viewBox="0 0 10 15" style="display:block"><path d="M3 2.800l6 5l-6 5z" fill="#000"/></svg></div>
  <div class="gc" style="left:11px;top:105.60px;width:74px;height:16.72px;font-weight:bold;background:#ddeefb;padding-left:2.5px;padding-top:2.6px;"><span style="letter-spacing:0.06px">PIEPR-0071</span></div>
  <div class="gc" style="left:85px;top:105.60px;width:55.5px;height:16.72px;font-weight:bold;background:#ddeefb;padding-left:2.5px;padding-top:2.6px;"><span style="letter-spacing:-0.03px">L38</span></div>
  <div class="gc" style="left:140.5px;top:105.60px;width:124.5px;height:16.72px;font-weight:bold;background:#ddeefb;padding-left:2.5px;padding-top:2.6px;"><span style="letter-spacing:0.18px">Piena šokolāde 100g</span></div>
  <div class="gc" style="left:265px;top:105.60px;width:60px;height:16.72px;font-weight:bold;background:#ddeefb;padding-left:2.5px;padding-top:2.6px;"><span style="letter-spacing:-1.20px">LN</span></div>
  <div class="gc" style="left:325px;top:105.60px;width:83px;height:16.72px;font-weight:bold;background:#ddeefb;padding-left:2.5px;padding-top:2.6px;"><span style="letter-spacing:-0.23px">KLIENTS NR5 ...</span></div>
  <div class="gc" style="left:408px;top:105.60px;width:74.5px;height:16.72px;font-weight:bold;background:#ddeefb;padding-left:2.5px;padding-top:2.6px;"><span style="letter-spacing:0.06px">Apstiprināts</span></div>
  <div class="gc n" style="left:482.5px;top:105.60px;width:55px;height:16.72px;padding-right:1.5px;font-weight:bold;background:#ddeefb;padding-left:2.5px;padding-top:2.6px;"><span style="letter-spacing:0.76px">200</span></div>
  <div class="gc n" style="left:537.5px;top:105.60px;width:69.5px;height:16.72px;padding-right:1.5px;font-weight:bold;background:#ddeefb;padding-left:2.5px;padding-top:2.6px;"><span style="letter-spacing:0.76px">200</span></div>
  <div class="gc n" style="left:607px;top:105.60px;width:55px;height:16.72px;padding-right:1.5px;font-weight:bold;background:#ddeefb;padding-left:2.5px;padding-top:2.6px;"><span style="letter-spacing:0.40px">0</span></div>
  <div class="gc" style="left:662px;top:105.60px;width:29px;height:16.72px;font-weight:bold;background:#ddeefb;padding-left:2.5px;padding-top:2.6px;"></div>
  <div class="a" style="left:691px;top:0;width:17px;height:135px;background:#f0f0f0"><svg class="a" style="left:4px;top:7px" width="9" height="6" viewBox="0 0 9 6"><path d="M1 5l3.500-3.500l3.500 3.500" stroke="#555" stroke-width="1.400" fill="none"/></svg><div class="a" style="left:2px;top:103px;width:12px;height:15px;background:#cdcdcd"></div><svg class="a" style="left:4px;top:124px" width="9" height="6" viewBox="0 0 9 6"><path d="M1 1l3.500 3.500l3.500-3.500" stroke="#555" stroke-width="1.400" fill="none"/></svg></div>
 </div>
 <div class="a" style="left:1px;top:241px;width:691px;height:16px;background:#f0f0f0"><svg class="a" style="left:5px;top:3px" width="6" height="9" viewBox="0 0 6 9"><path d="M5 1l-3.500 3.500l3.500 3.500" stroke="#444" stroke-width="1.400" fill="none"/></svg><div class="a" style="left:17px;top:2px;width:15px;height:12px;background:#cdcdcd"></div><svg class="a" style="left:681px;top:3px" width="6" height="9" viewBox="0 0 6 9"><path d="M1 1l3.500 3.500l-3.500 3.500" stroke="#444" stroke-width="1.400" fill="none"/></svg></div>
 <div class="btn def" style="left:275px;top:260.500px;width:70px;height:21.500px"><span style="letter-spacing:-0.12px">Izvēlēties</span></div>
 <div class="btn" style="left:363.500px;top:260.500px;width:69px;height:21.500px"><span style="letter-spacing:0.02px">Atcelt</span></div>
</div></div>
<!-- context menu -->
<div class="a" style="left:801px;top:241px;width:179px;height:96px;background:#f2f2f2;box-shadow:2px 2px 3px rgba(0,0,0,.15)">
 <div class="lb" style="left:22.500px;top:1.5px;font-size:9px;line-height:14px;letter-spacing:0"><span style="letter-spacing:-0.17px">Piesaistīt pieprasījumus</span></div>
 <div class="lb" style="left:22.500px;top:18px;font-size:9px;line-height:14px;letter-spacing:0"><span style="letter-spacing:-0.14px">Piesaistīt pieprasījumu rindas</span></div>
 <div class="a" style="left:20px;top:35px;width:159px;height:1px;background:#dedede"></div>
 <div class="lb" style="left:22.500px;top:39.5px;font-size:9px;line-height:14px;letter-spacing:0"><span style="letter-spacing:-0.17px">Atcelt rindai visas piesaistes</span></div>
 <div class="a" style="left:20px;top:57px;width:159px;height:1px;background:#dedede"></div>
 <div class="lb" style="left:22.500px;top:61px;font-size:9px;line-height:14px;letter-spacing:0"><span style="letter-spacing:0.01px">Aizpildīt no pieprasījumiem</span></div>
</div>
<!-- highlighted menu item -->
<div class="a" style="left:800.500px;top:316px;width:184px;height:19.500px;background:#91c9f7;border:2.500px solid #ff8200;box-shadow:0 2px 4px rgba(0,0,0,.35)">
 <div class="lb" style="left:20.500px;top:-0.5px;font-size:9px;line-height:14px;letter-spacing:0"><span style="letter-spacing:0.01px">Aizpildīt no pieprasījumu rindām</span></div>
</div>
<!-- orange highlight boxes -->
<div class="a" style="left:17px;top:218px;width:163px;height:25px;border:3px solid #ff8200;box-shadow:1px 2px 4px rgba(0,0,0,.4)"></div>
<div class="a" style="left:779px;top:209px;width:27px;height:29px;border:3px solid #ff8200;box-shadow:1px 2px 4px rgba(0,0,0,.4)"></div>
<!-- red arrow -->
<svg class="a" style="left:0;top:0" width="980" height="545" viewBox="0 0 980 545"><defs><filter id="bl" x="-5%" y="-5%" width="110%" height="110%"><feGaussianBlur stdDeviation="1"/></filter></defs><g opacity=".38" transform="translate(1.500,2)" filter="url(#bl)"><path d="M803 327.700L189 230" stroke="#000" stroke-width="1.800" fill="none"/><path d="M179.400 228.500l11-2.300l-.8 8.200z" fill="#000"/></g><path d="M803 327.700L189 230" stroke="#ff0000" stroke-width="1.700" fill="none"/><path d="M179.400 228.500l11.200-2.400l-1 8.400z" fill="#ff0000"/></svg>
</body></html>
